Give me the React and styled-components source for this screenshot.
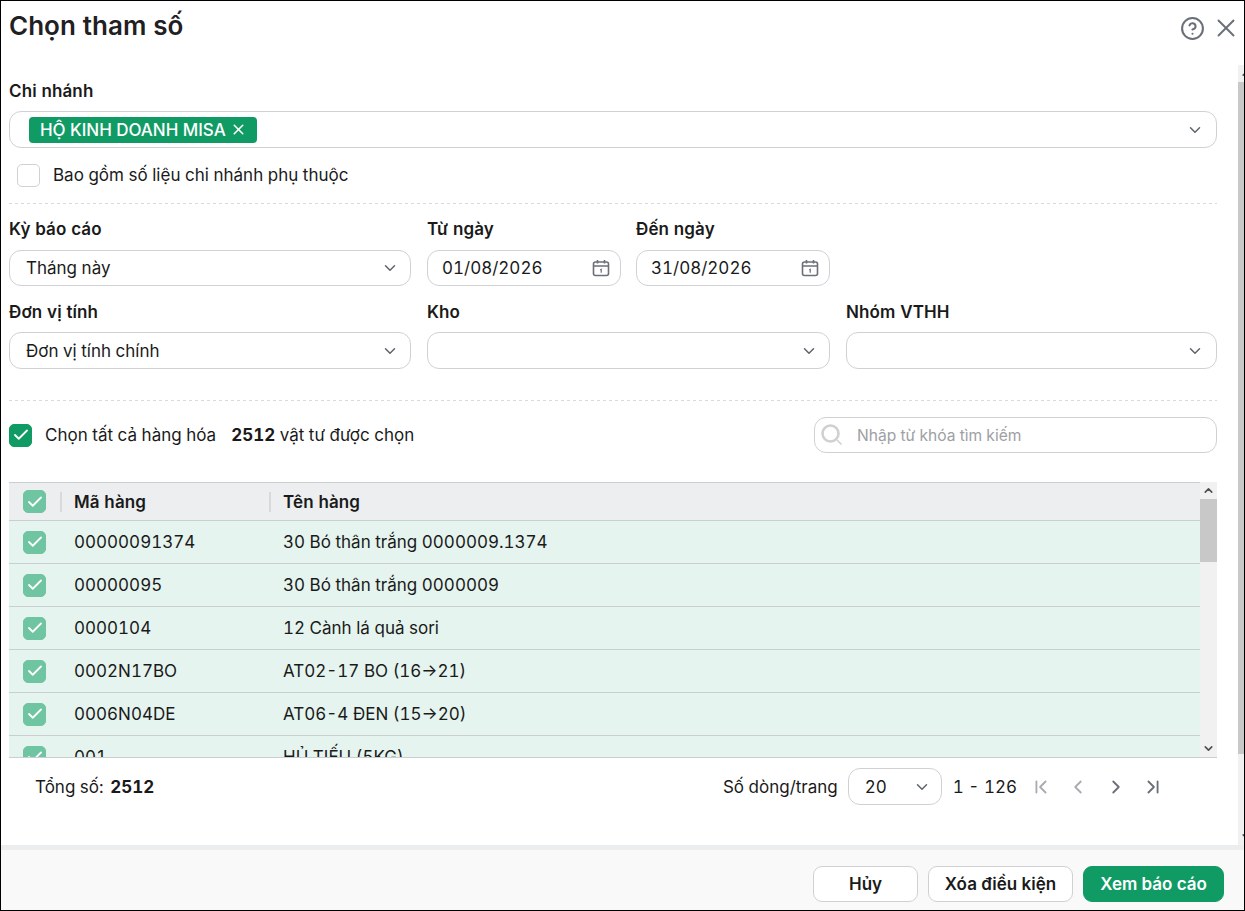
import React from "react";
import styled, { createGlobalStyle } from "styled-components";
import { ChevronFirst, ChevronLast, ChevronLeft, ChevronRight, ChevronDown, ChevronUp, X, Check, CircleHelp } from "lucide-react";

const Global = createGlobalStyle`
  *, *::before, *::after { box-sizing: border-box; }
  html, body { margin: 0; padding: 0; background: #fff; }
  body { font-family: Inter, "Noto Sans", sans-serif; color: #1a1a1a; font-size: 17px; font-variant-numeric: tabular-nums; }
`;

const Dialog = styled.div`
  width: 1245px; height: 911px; border: 1px solid #000; background: #fff;
  display: flex; flex-direction: column; overflow: hidden;
`;
const Header = styled.header`
  height: 64px; flex: none; display: flex; justify-content: space-between; align-items: flex-start;
  padding: 0 3px 0 8px;
`;
const Title = styled.h1`
  margin: 9px 0 0; font-size: 26px; line-height: 32px; font-weight: 600; color: #1f2023;
`;
const HeaderIcons = styled.div`
  display: flex; align-items: center; gap: 6px; margin-top: 12px; color: #6b6f78;
`;
const Middle = styled.div`
  flex: 1; display: flex; min-height: 0;
`;
const Content = styled.main`
  flex: 1; min-width: 0; padding: 16px 21px 0 8px; display: flex; flex-direction: column;
`;
const Rail = styled.div`
  flex: none; width: ${p => p.$w}px; background: #f1f1f1; display: flex; flex-direction: column; overflow: hidden; color: #505050;
`;
const RailButton = styled.div`
  flex: none; height: ${p => p.$h}px; width: 17px; display: flex; align-items: center; justify-content: center;
`;
const RailThumb = styled.div`
  flex: none; height: ${p => p.$h}px; background: #c8c8c8;
`;
const RailSpacer = styled.div`flex: 1;`;
const Label = styled.label`
  display: block; font-weight: 600; font-size: 17px; line-height: 20px; letter-spacing: .12px; color: #1a1a1a; margin-bottom: ${p => p.$mb ?? 10}px;
`;
const Field = styled.div`
  height: ${p => p.$h ?? 37}px; border: 1px solid #d0d1d4; border-radius: 12px; background: #fff;
  display: flex; align-items: center; justify-content: space-between; padding: 0 ${p => p.$pr ?? 11}px 0 ${p => p.$pl ?? 16}px;
  font-size: 17px; color: #1a1a1a;
`;
const Caret = styled(ChevronDown)`color: #5f636b; flex: none;`;
const Tag = styled.span`
  height: 26px; background: #109b65; border-radius: 4px; color: #fff; display: inline-flex; align-items: center; gap: 4px;
  padding: 0 10px 0 11px; font-size: 17px; font-weight: 500; letter-spacing: -.05px;
`;
const CheckRow = styled.div`
  display: flex; align-items: center; margin: ${p => p.$m ?? "0"}; gap: ${p => p.$gap}px; font-size: 17px; line-height: 23px;
`;
const Box = styled.span`
  width: 23px; height: 23px; flex: none; border-radius: 5px; display: inline-flex; align-items: center; justify-content: center;
  background: ${p => p.$fill ?? "#fff"}; border: 1px solid ${p => p.$fill ?? "#d0d1d4"}; color: #fff;
`;
const Divider = styled.div`
  flex: none; height: 1px; margin-top: ${p => p.$mt}px; background: repeating-linear-gradient(90deg, #d9dadc 0 3px, transparent 3px 6px);
`;
const FormGrid = styled.div`
  display: grid; grid-template-columns: 402px 403px 371px; column-gap: 16px; row-gap: 16px; margin-top: 15px;
`;
const DatePair = styled.div`
  display: grid; grid-template-columns: 194px 194px; column-gap: 15px;
`;
const SelectRow = styled.div`
  display: flex; align-items: center; justify-content: space-between; margin-top: 16px; height: 36px;
`;
const Count = styled.span`margin-left: 2px;`;
const Strong = styled.b`font-weight: 700;`;
const TotalValue = styled(Strong)`margin-left: 2px;`;
const Search = styled.div`
  width: 403px; height: 36px; border: 1px solid #d0d1d4; border-radius: 12px; display: flex; align-items: center; padding-left: 6px; gap: 14px;
  color: #9ea0a4; font-size: 15.6px;
`;
const Table = styled.section`
  flex: none; margin-top: 29px; height: 276px; display: flex; border-bottom: 1px solid #c9cfd0;
`;
const TableMain = styled.div`
  flex: 1; min-width: 0; overflow: hidden; border-top: 1px solid #c9cfd0;
`;
const Row = styled.div`
  display: grid; grid-template-columns: 37px 209px 1fr; align-items: center; height: ${p => p.$head ? 38 : 43}px;
  background: ${p => p.$head ? "#eceef0" : "#e5f4ee"}; border-bottom: 1px solid #c9cfd0; font-size: 17px;
  padding-left: 14px; font-weight: ${p => p.$head ? 600 : 400}; letter-spacing: ${p => p.$head ? ".12px" : "0"};
`;
const CellBox = styled.div`
  display: flex; align-items: center;
`;
const HeadCell = styled.div`
  position: relative; padding-left: 14px; line-height: 20px; &::before { content: ""; position: absolute; left: 0; top: 0; width: 2px; height: 20px; background: #d7d9dc; }
`;
const Cell = styled.div`padding-left: 14px; white-space: nowrap;`;
const Pager = styled.div`
  display: flex; align-items: center; margin-top: 10px; height: 37px; padding-left: 26px;
`;
const PagerSpacer = styled.div`flex: 1;`;
const PageSize = styled(Field)`
  width: 94px; margin: 0 11px 0 10px; padding-left: 16px; padding-right: 10px;
`;
const Range = styled.span`margin-right: 13px;`;
const PagerIcons = styled.div`
  display: flex; align-items: center; gap: 15.33px; margin-right: 53px;
`;
const PagerIcon = styled.span`
  display: inline-flex; color: ${p => p.$off ? "#a9abb0" : "#6b6f78"};
`;
const Footer = styled.footer`
  flex: none; height: 65px; border-top: 5px solid #ecedef; background: #f9f9f9; display: flex; justify-content: flex-end; gap: 10px;
  padding: 16px 20px 0 0;
`;
const Button = styled.button`
  height: 36px; width: ${p => p.$w}px; border-radius: 9px; font: 600 17px Inter, sans-serif; cursor: pointer;
  background: ${p => p.$primary ? "#109b65" : "#fff"}; color: ${p => p.$primary ? "#fff" : "#1a1a1a"};
  border: 1px solid ${p => p.$primary ? "#109b65" : "#d0d1d4"}; padding: 0;
`;

const CalendarIcon = () => (
  <svg width="18" height="18" viewBox="0 0 18 18" fill="none" stroke="#6b6f78" strokeWidth="1.6">
    <rect x="1.5" y="3" width="15" height="13.5" rx="2" />
    <path d="M1.5 7h15M5.5 1v3.5M12.5 1v3.5" />
    <path d="M8.2 11l1-.7v3.4" strokeWidth="1.2" />
  </svg>
);
const SearchIcon = () => (
  <svg width="22" height="22" viewBox="0 0 22 22" fill="none" stroke="#cfd0d2">
    <circle cx="9.5" cy="9.5" r="8" strokeWidth="2.6" />
    <path d="M16 16l4.5 4.5" strokeWidth="1.6" />
  </svg>
);

const rows = [
  ["00000091374", "30 Bó thân trắng 0000009.1374"],
  ["00000095", "30 Bó thân trắng 0000009"],
  ["0000104", "12 Cành lá quả sori"],
  ["0002N17BO", "AT02-17 BO (16→21)"],
  ["0006N04DE", "AT06-4 ĐEN (15→20)"],
  ["001", "HỦ TIẾU (5KG)"],
];
const GridCheck = () => (
  <Box $fill="#6fc4a1"><Check size={18} strokeWidth={2.4} /></Box>
);
const Select = ({ children, h, pr }) => (
  <Field $h={h} $pr={pr}><span>{children}</span><Caret size={18} /></Field>
);

export default function App() {
  return (
    <>
      <Global />
      <Dialog>
        <Header>
          <Title>Chọn tham số</Title>
          <HeaderIcons>
            <CircleHelp size={25} strokeWidth={2} />
            <X size={30} strokeWidth={1.5} />
          </HeaderIcons>
        </Header>
        <Middle>
          <Content>
            <Label>Chi nhánh</Label>
            <Field $pl={19} $pr={12}>
              <Tag>HỘ KINH DOANH MISA <X size={17} strokeWidth={2.2} /></Tag>
              <Caret size={18} />
            </Field>
            <CheckRow $m="16px 0 0 8px" $gap={13}>
              <Box />
              Bao gồm số liệu chi nhánh phụ thuộc
            </CheckRow>
            <Divider $mt={16} />
            <FormGrid>
              <div>
                <Label $mb={11}>Kỳ báo cáo</Label>
                <Select h={36}>Tháng này</Select>
              </div>
              <DatePair>
                <div>
                  <Label $mb={11}>Từ ngày</Label>
                  <Field $h={36} $pl={14} $pr={10}><span>01/08/2026</span><CalendarIcon /></Field>
                </div>
                <div>
                  <Label $mb={11}>Đến ngày</Label>
                  <Field $h={36} $pl={14} $pr={10}><span>31/08/2026</span><CalendarIcon /></Field>
                </div>
              </DatePair>
              <div />
              <div>
                <Label>Đơn vị tính</Label>
                <Select>Đơn vị tính chính</Select>
              </div>
              <div>
                <Label>Kho</Label>
                <Select />
              </div>
              <div>
                <Label>Nhóm VTHH</Label>
                <Select pr={12} />
              </div>
            </FormGrid>
            <Divider $mt={31} />
            <SelectRow>
              <CheckRow $gap={13}>
                <Box $fill="#109b65"><Check size={18} strokeWidth={2.4} /></Box>
                Chọn tất cả hàng hóa
                <Count><Strong>2512</Strong> vật tư được chọn</Count>
              </CheckRow>
              <Search><SearchIcon />Nhập từ khóa tìm kiếm</Search>
            </SelectRow>
            <Table>
              <TableMain>
                <Row $head>
                  <CellBox><GridCheck /></CellBox>
                  <HeadCell>Mã hàng</HeadCell>
                  <HeadCell>Tên hàng</HeadCell>
                </Row>
                {rows.map(([code, name]) => (
                  <Row key={code}>
                    <CellBox><GridCheck /></CellBox>
                    <Cell>{code}</Cell>
                    <Cell>{name}</Cell>
                  </Row>
                ))}
              </TableMain>
              <Rail $w={17}>
                <RailButton $h={17}><ChevronUp size={13} strokeWidth={3} /></RailButton>
                <RailThumb $h={63} />
                <RailSpacer />
                <RailButton $h={17}><ChevronDown size={13} strokeWidth={3} /></RailButton>
              </Rail>
            </Table>
            <Pager>
              <span>Tổng số: <TotalValue>2512</TotalValue></span>
              <PagerSpacer />
              <span>Số dòng/trang</span>
              <PageSize><span>20</span><Caret size={18} /></PageSize>
              <Range>1 - 126</Range>
              <PagerIcons>
                <PagerIcon $off><ChevronFirst size={22} /></PagerIcon>
                <PagerIcon $off><ChevronLeft size={22} /></PagerIcon>
                <PagerIcon><ChevronRight size={22} /></PagerIcon>
                <PagerIcon><ChevronLast size={22} /></PagerIcon>
              </PagerIcons>
            </Pager>
          </Content>
          <Rail $w={6}>
            <RailButton $h={17}><ChevronUp size={13} strokeWidth={3} /></RailButton>
            <RailThumb $h={672} />
            <RailSpacer />
            <RailButton $h={17}><ChevronDown size={13} strokeWidth={3} /></RailButton>
          </Rail>
        </Middle>
        <Footer>
          <Button $w={105}>Hủy</Button>
          <Button $w={145}>Xóa điều kiện</Button>
          <Button $w={141} $primary>Xem báo cáo</Button>
        </Footer>
      </Dialog>
    </>
  );
}
